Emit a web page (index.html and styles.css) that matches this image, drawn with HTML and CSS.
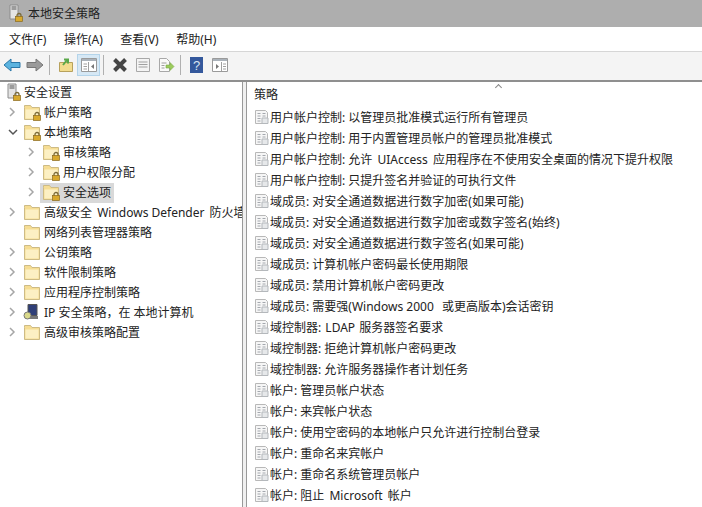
FILE: index.html
```html
<!DOCTYPE html>
<html lang="zh-CN">
<head>
  <meta charset="UTF-8" />
  <title>本地安全策略</title>
  <link rel="stylesheet" href="styles.css">
</head>
<body>
  <svg class="defs" width="0" height="0">
    <defs>
      <symbol id="folder" viewBox="0 0 18 18">
        <path d="M1.500 4.500V2.500h6l1.500 2h7.500v12h-15z" fill="#f6dd94" stroke="#cdbb85"/>
        <path d="M2.500 6.500h13v9h-13z" fill="#fcf0c4"/>
      </symbol>
      <symbol id="lock" viewBox="0 0 10 10">
        <path d="M3 5V3.500a2 2 0 0 1 4 0V5" fill="none" stroke="#7a6a3a" stroke-width="1.300"/>
        <rect x="1.500" y="4.500" width="7" height="5" fill="#d8a92e" stroke="#8a6a1e" stroke-width=".7"/>
      </symbol>
      <symbol id="policy" viewBox="0 0 16 16">
        <path d="M1.500 1.500h10l2 2v11h-12z" fill="#f6f6f6" stroke="#b8b8b8"/>
        <path d="M3.500 4.500h3M3.500 7h3M3.500 9.500h3M3.500 12h3M8.500 4.500h3M8.500 7h3" stroke="#a4a8ae"/>
        <path d="M8 9h6v5.500H8z" fill="#e6e8ea" stroke="#b4b8bc"/>
      </symbol>
      <symbol id="chevron" viewBox="0 0 8 10">
        <path d="M2 1l4 4-4 4" fill="none" stroke="#a6a6a6" stroke-width="1.500"/>
      </symbol>
      <symbol id="chevron-open" viewBox="0 0 10 8">
        <path d="M1 2l4 4 4-4" fill="none" stroke="#555" stroke-width="1.500"/>
      </symbol>
      <symbol id="server" viewBox="0 0 18 18">
        <path d="M2 1h8v14H2z" fill="#e4e4e4" stroke="#8c8c8c"/>
        <path d="M3.500 3h5M3.500 5h5" stroke="#555"/>
      </symbol>
    </defs>
  </svg>

  <header class="title-bar">
    <span class="title-icon">
      <svg class="icon-18"><use href="#server"/></svg>
      <svg class="icon-lock"><use href="#lock"/></svg>
    </span>
    <span>本地安全策略</span>
  </header>

  <nav class="menu-bar">
    <span>文件(F)</span>
    <span>操作(A)</span>
    <span>查看(V)</span>
    <span>帮助(H)</span>
  </nav>

  <div class="toolbar">
    <button class="tool">
      <svg viewBox="0 0 18 14" width="18" height="14"><path d="M1 7l7-6v3.500h9v5H8V13z" fill="#5bb3df" stroke="#2a77a8"/></svg>
    </button>
    <button class="tool">
      <svg viewBox="0 0 18 14" width="18" height="14"><path d="M17 7l-7-6v3.500H1v5h9V13z" fill="#9a9a9a" stroke="#777"/></svg>
    </button>
    <span class="tool-sep"></span>
    <button class="tool">
      <svg viewBox="0 0 16 16" width="16" height="16"><path d="M1.500 5.500h13v9h-13z" fill="#f2dc8e" stroke="#b7a15c"/><path d="M5 8l4-5M6 2.500h4v4" fill="none" stroke="#5aa84a" stroke-width="2"/></svg>
    </button>
    <button class="tool tool-active">
      <svg viewBox="0 0 18 16" width="18" height="16"><path d="M1.500 1.500h15v13h-15z" fill="#fff" stroke="#9a9a9a"/><path d="M2 2h14v2H2z" fill="#aab2ba"/><path d="M8.500 5v9M3.500 7h3.500M3.500 9.500h3.500M3.500 12h3.500" stroke="#a0a0a0"/><path d="M14 7v5l-3-2.500z" fill="#777"/></svg>
    </button>
    <span class="tool-sep"></span>
    <button class="tool">
      <svg viewBox="0 0 16 16" width="16" height="16"><path d="M2.500 2.500l11 11M13.500 2.500l-11 11" stroke="#444" stroke-width="4"/></svg>
    </button>
    <button class="tool">
      <svg viewBox="0 0 16 16" width="16" height="16"><path d="M1.500 1.500h13v13h-13z" fill="#f4f4f4" stroke="#a8a8a8"/><path d="M3.500 5h9M3.500 7.500h9M3.500 10h9" stroke="#a0a0a0"/></svg>
    </button>
    <button class="tool">
      <svg viewBox="0 0 18 16" width="18" height="16"><path d="M2.500 1.500h7l3 3v10h-10z" fill="#fafafa" stroke="#a8a8a8"/><path d="M4.500 6h5M4.500 8.500h3M4.500 11h3" stroke="#a0a0a0"/><path d="M9 8h4V5.500l4 4-4 4V11H9z" fill="#9ccc5c" stroke="#7aa848" stroke-width=".6"/></svg>
    </button>
    <span class="tool-sep"></span>
    <button class="tool">
      <svg viewBox="0 0 14 16" width="14" height="16"><rect width="13" height="16" fill="#34589c"/><text x="6.500" y="13" class="help-mark">?</text></svg>
    </button>
    <button class="tool">
      <svg viewBox="0 0 18 16" width="18" height="16"><path d="M1.500 1.500h15v13h-15z" fill="#fff" stroke="#9a9a9a"/><path d="M2 2h14v2H2z" fill="#aab2ba"/><path d="M10.500 5v9M12 7h3M12 9.500h3M12 12h3" stroke="#a0a0a0"/><path d="M5 7v5l3-2.500z" fill="#777"/></svg>
    </button>
  </div>

  <main class="panes">
    <aside class="tree">
      <div class="tree-row">
        <span class="tree-root-icon">
          <svg class="icon-18"><use href="#server"/></svg>
          <svg class="icon-lock"><use href="#lock"/></svg>
        </span>
        <span>安全设置</span>
      </div>
      <div class="tree-row level-1">
        <svg class="chevron"><use href="#chevron"/></svg>
        <span class="folder"><svg class="icon-18"><use href="#folder"/></svg><svg class="icon-lock"><use href="#lock"/></svg></span>
        <span>帐户策略</span>
      </div>
      <div class="tree-row level-1">
        <svg class="chevron-open"><use href="#chevron-open"/></svg>
        <span class="folder"><svg class="icon-18"><use href="#folder"/></svg><svg class="icon-lock"><use href="#lock"/></svg></span>
        <span>本地策略</span>
      </div>
      <div class="tree-row level-2">
        <svg class="chevron"><use href="#chevron"/></svg>
        <span class="folder"><svg class="icon-18"><use href="#folder"/></svg><svg class="icon-lock"><use href="#lock"/></svg></span>
        <span>审核策略</span>
      </div>
      <div class="tree-row level-2">
        <svg class="chevron"><use href="#chevron"/></svg>
        <span class="folder"><svg class="icon-18"><use href="#folder"/></svg><svg class="icon-lock"><use href="#lock"/></svg></span>
        <span>用户权限分配</span>
      </div>
      <div class="tree-row level-2">
        <svg class="chevron"><use href="#chevron"/></svg>
        <span class="selected">
          <span class="folder"><svg class="icon-18"><use href="#folder"/></svg><svg class="icon-lock"><use href="#lock"/></svg></span>
          <span>安全选项</span>
        </span>
      </div>
      <div class="tree-row level-1">
        <svg class="chevron"><use href="#chevron"/></svg>
        <span class="folder"><svg class="icon-18"><use href="#folder"/></svg></span>
        <span>高级安全 <span class="latin">Windows Defender</span> 防火墙</span>
      </div>
      <div class="tree-row level-1">
        <span class="chevron"></span>
        <span class="folder"><svg class="icon-18"><use href="#folder"/></svg></span>
        <span>网络列表管理器策略</span>
      </div>
      <div class="tree-row level-1">
        <svg class="chevron"><use href="#chevron"/></svg>
        <span class="folder"><svg class="icon-18"><use href="#folder"/></svg></span>
        <span>公钥策略</span>
      </div>
      <div class="tree-row level-1">
        <svg class="chevron"><use href="#chevron"/></svg>
        <span class="folder"><svg class="icon-18"><use href="#folder"/></svg></span>
        <span>软件限制策略</span>
      </div>
      <div class="tree-row level-1">
        <svg class="chevron"><use href="#chevron"/></svg>
        <span class="folder"><svg class="icon-18"><use href="#folder"/></svg></span>
        <span>应用程序控制策略</span>
      </div>
      <div class="tree-row level-1">
        <svg class="chevron"><use href="#chevron"/></svg>
        <span class="folder">
          <svg viewBox="0 0 18 18" class="icon-18"><path d="M5 1.500h9v11H5z" fill="#2f3f78" stroke="#555"/><path d="M4 13h11v3H4z" fill="#777"/><circle cx="4.500" cy="12.500" r="3.500" fill="#d9d98a" stroke="#777"/></svg>
        </span>
        <span>IP 安全策略，在 本地计算机</span>
      </div>
      <div class="tree-row level-1">
        <svg class="chevron"><use href="#chevron"/></svg>
        <span class="folder"><svg class="icon-18"><use href="#folder"/></svg></span>
        <span>高级审核策略配置</span>
      </div>
    </aside>

    <section class="list">
      <div class="list-head">策略</div>
      <div class="sort-mark"></div>
      <div class="list-row"><svg class="icon-16"><use href="#policy"/></svg>用户帐户控制: 以管理员批准模式运行所有管理员</div>
      <div class="list-row"><svg class="icon-16"><use href="#policy"/></svg>用户帐户控制: 用于内置管理员帐户的管理员批准模式</div>
      <div class="list-row"><svg class="icon-16"><use href="#policy"/></svg>用户帐户控制: 允许 <span class="latin">UIAccess</span> 应用程序在不使用安全桌面的情况下提升权限</div>
      <div class="list-row"><svg class="icon-16"><use href="#policy"/></svg>用户帐户控制: 只提升签名并验证的可执行文件</div>
      <div class="list-row"><svg class="icon-16"><use href="#policy"/></svg>域成员: 对安全通道数据进行数字加密(如果可能)</div>
      <div class="list-row"><svg class="icon-16"><use href="#policy"/></svg>域成员: 对安全通道数据进行数字加密或数字签名(始终)</div>
      <div class="list-row"><svg class="icon-16"><use href="#policy"/></svg>域成员: 对安全通道数据进行数字签名(如果可能)</div>
      <div class="list-row"><svg class="icon-16"><use href="#policy"/></svg>域成员: 计算机帐户密码最长使用期限</div>
      <div class="list-row"><svg class="icon-16"><use href="#policy"/></svg>域成员: 禁用计算机帐户密码更改</div>
      <div class="list-row"><svg class="icon-16"><use href="#policy"/></svg>域成员: 需要强(<span class="latin-end">Windows 2000</span> 或更高版本)会话密钥</div>
      <div class="list-row"><svg class="icon-16"><use href="#policy"/></svg>域控制器: <span class="latin-narrow">LDAP</span> 服务器签名要求</div>
      <div class="list-row"><svg class="icon-16"><use href="#policy"/></svg>域控制器: 拒绝计算机帐户密码更改</div>
      <div class="list-row"><svg class="icon-16"><use href="#policy"/></svg>域控制器: 允许服务器操作者计划任务</div>
      <div class="list-row"><svg class="icon-16"><use href="#policy"/></svg>帐户: 管理员帐户状态</div>
      <div class="list-row"><svg class="icon-16"><use href="#policy"/></svg>帐户: 来宾帐户状态</div>
      <div class="list-row"><svg class="icon-16"><use href="#policy"/></svg>帐户: 使用空密码的本地帐户只允许进行控制台登录</div>
      <div class="list-row"><svg class="icon-16"><use href="#policy"/></svg>帐户: 重命名来宾帐户</div>
      <div class="list-row"><svg class="icon-16"><use href="#policy"/></svg>帐户: 重命名系统管理员帐户</div>
      <div class="list-row"><svg class="icon-16"><use href="#policy"/></svg>帐户: 阻止 <span class="latin">Microsoft</span> 帐户</div>
    </section>
  </main>
</body>
</html>
```

FILE: styles.css
```css
* {
  box-sizing: border-box;
  margin: 0;
  padding: 0;
}

html, body {
  height: 507px;
  overflow: hidden;
}

body {
  font-family: "Noto Sans", "Noto Sans CJK SC", sans-serif;
  font-size: 12px;
  color: #222;
  background-color: #fff;
  display: flex;
  flex-direction: column;
}

.defs {
  position: absolute;
}

.title-bar {
  height: 27px;
  background-color: #aeaeae;
  display: flex;
  align-items: center;
  gap: 5px;
  padding: 0 0 2px 8px;
  font-size: 12px;
}

.title-icon, .tree-root-icon {
  position: relative;
  display: inline-block;
  width: 15px;
  height: 18px;
  flex: none;
}

.folder {
  position: relative;
  display: inline-block;
  width: 18px;
  height: 18px;
  flex: none;
}

.icon-18 {
  width: 18px;
  height: 18px;
  display: block;
}

.icon-16 {
  width: 16px;
  height: 16px;
  vertical-align: -3px;
}

.icon-lock {
  position: absolute;
  right: -1px;
  bottom: 0;
  width: 10px;
  height: 10px;
}

.menu-bar {
  height: 25px;
  display: flex;
  align-items: center;
  gap: 17.5px;
  padding-left: 9px;
  background-color: #fff;
  border-bottom: 1px solid #d6d6d6;
}

.toolbar {
  height: 30px;
  display: flex;
  align-items: center;
  padding-bottom: 3px;
  background-color: #f4f4f4;
  border-bottom: 2px solid #8f8f8f;
}

.tool {
  width: 23px;
  height: 22px;
  border: 1px solid transparent;
  background: none;
  display: flex;
  align-items: center;
  justify-content: center;
}

.tool-active {
  background-color: #d6e8f5;
  border-color: #b4d4ea;
}

.help-mark {
  font-size: 13px;
  fill: #d8e4f4;
  text-anchor: middle;
}

.tool-sep {
  width: 1px;
  height: 20px;
  margin: 0 4px 0 3px;
  background-color: #b0b0b0;
}

.panes {
  flex: 1;
  display: flex;
  min-height: 0;
  background-color: #f0f0f0;
}

.tree {
  width: 243px;
  flex: none;
  padding-top: 1px;
  overflow: hidden;
  background-color: #fff;
  border-right: 1px solid #999;
}

.tree-row {
  height: 20px;
  display: flex;
  align-items: center;
  gap: 3px;
  padding: 0 0 2px 6px;
  white-space: nowrap;
}

.level-1 {
  padding-left: 8px;
}

.level-2 {
  padding-left: 27px;
}

.chevron {
  width: 8px;
  height: 10px;
  margin-right: 4px;
  flex: none;
}

.chevron-open {
  width: 10px;
  height: 8px;
  margin-right: 2px;
  flex: none;
}

.selected {
  display: flex;
  align-items: center;
  gap: 3px;
  height: 20px;
  margin: 2px 0 0 -2px;
  padding: 0 3px 2px 2px;
  background-color: #d9d9d9;
}

.latin {
  padding: 0 2px;
}

.latin-narrow {
  padding: 0 1px;
}

.latin-end {
  padding-right: 5px;
}

.list {
  position: relative;
  flex: 1;
  margin-left: 3px;
  padding-top: 3px;
  overflow: hidden;
  background-color: #fff;
  border-left: 1px solid #999;
}

.list-head {
  height: 22px;
  padding-left: 7px;
  line-height: 20px;
}

.sort-mark {
  position: absolute;
  top: 3px;
  left: 249px;
  width: 5px;
  height: 5px;
  border-left: 1px solid #888;
  border-top: 1px solid #888;
  transform: rotate(45deg);
}

.list-row {
  height: 21px;
  line-height: 21px;
  padding-left: 7px;
  white-space: pre;
}
```
